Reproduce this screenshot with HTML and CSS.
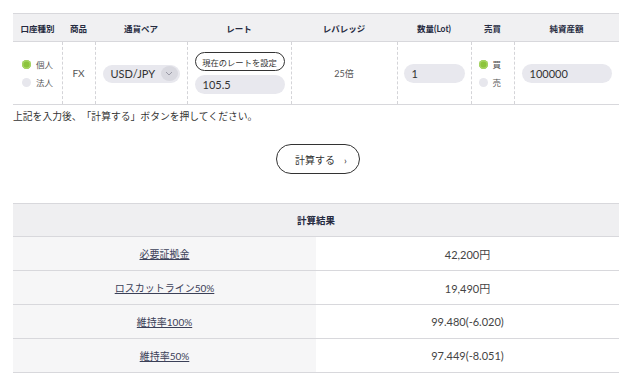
FILE: index.html
```html
<!DOCTYPE html>
<html lang="ja">
<head>
  <meta charset="UTF-8" />
  <title>証拠金計算</title>
  <link rel="stylesheet" href="styles.css">
</head>
<body>

  <div class="calc">
    <table class="input-table">
      <colgroup>
        <col style="width:49px"><col style="width:33px"><col style="width:92px"><col style="width:104px">
        <col style="width:106px"><col style="width:74px"><col style="width:43px"><col style="width:105px">
      </colgroup>
      <thead>
        <tr>
          <th>口座種別</th>
          <th>商品</th>
          <th>通貨ペア</th>
          <th>レート</th>
          <th>レバレッジ</th>
          <th>数量(Lot)</th>
          <th>売買</th>
          <th>純資産額</th>
        </tr>
      </thead>
      <tbody>
        <tr>
          <td>
            <label class="radio"><span class="dot on"></span>個人</label>
            <label class="radio"><span class="dot"></span>法人</label>
          </td>
          <td class="center">FX</td>
          <td>
            <div class="select">USD/JPY<span class="chev"><svg width="8" height="5" viewBox="0 0 8 5"><path d="M1 1l3 3 3-3" fill="none" stroke="#9a9aa6" stroke-width="1"/></svg></span></div>
          </td>
          <td>
            <button class="rate-btn" type="button">現在のレートを設定</button>
            <div class="field">105.5</div>
          </td>
          <td class="center small">25倍</td>
          <td><div class="field qty">1</div></td>
          <td>
            <label class="radio"><span class="dot on"></span>買</label>
            <label class="radio"><span class="dot"></span>売</label>
          </td>
          <td><div class="field asset">100000</div></td>
        </tr>
      </tbody>
    </table>

    <p class="note">上記を入力後、「計算する」ボタンを押してください。</p>

    <div class="actions">
      <button class="calc-btn" type="button">計算する<span class="arrow">›</span></button>
    </div>

    <table class="result-table">
      <thead>
        <tr><th colspan="2">計算結果</th></tr>
      </thead>
      <tbody>
        <tr><td class="label"><a href="#">必要証拠金</a></td><td>42,200円</td></tr>
        <tr><td class="label"><a href="#">ロスカットライン50%</a></td><td>19,490円</td></tr>
        <tr><td class="label"><a href="#">維持率100%</a></td><td>99.480(-6.020)</td></tr>
        <tr><td class="label"><a href="#">維持率50%</a></td><td>97.449(-8.051)</td></tr>
      </tbody>
    </table>
  </div>

</body>
</html>
```

FILE: styles.css
```css
* {
  box-sizing: border-box;
  font-family: Lato, "Noto Sans CJK JP", sans-serif;
  text-spacing-trim: space-all;
}

body {
  margin: 0;
  padding: 13px 0 0 13px;
  background: #ffffff;
  color: #444;
}

.calc {
  width: 606px;
}

table {
  width: 100%;
  border-collapse: collapse;
  table-layout: fixed;
}

.input-table th {
  height: 28px;
  background: #f0f0f2;
  border-top: 1px solid #d8d8dc;
  border-bottom: 1px solid #d8d8dc;
  font-size: 8.5px;
  font-weight: 700;
  color: #252a40;
  text-align: center;
  padding: 0;
}

.input-table td {
  height: 63px;
  border-bottom: 1px solid #d8d8dc;
  border-left: 1px dashed #d4d4d8;
  padding: 0 7px;
  font-size: 10px;
  color: #555;
  vertical-align: middle;
}

.input-table td:first-child {
  border-left: none;
  padding-left: 9px;
}

.center {
  text-align: center;
}

.input-table td.small {
  font-size: 9px;
}

.radio {
  display: flex;
  align-items: center;
  gap: 5px;
  height: 18px;
  font-size: 8.5px;
  color: #555;
}

.dot {
  width: 9px;
  height: 9px;
  border-radius: 50%;
  background: #e7e7ed;
}

.dot.on {
  background: #8cc43c;
  box-shadow: inset 0 0 0 1.5px #a6d464;
}

.select {
  display: flex;
  align-items: center;
  justify-content: space-between;
  height: 18px;
  margin-top: 1px;
  padding: 0 2px 0 8px;
  background: #e8e8ee;
  border-radius: 9px;
  font-size: 11px;
  color: #333;
}

.chev {
  display: flex;
  align-items: center;
  justify-content: center;
  width: 17px;
  height: 15px;
  border-radius: 50%;
  background: #d9d9e0;
}

.rate-btn {
  display: block;
  width: 90px;
  height: 19px;
  padding: 0;
  margin-bottom: 4px;
  background: #fff;
  border: 1px solid #333;
  border-radius: 10px;
  font-size: 8.3px;
  color: #333;
}

.field {
  height: 19px;
  line-height: 19px;
  width: 90px;
  padding: 0 8px;
  background: #e8e8ee;
  border-radius: 10px;
  font-size: 11px;
  color: #333;
}

.field.qty {
  width: 61px;
  margin-left: -1px;
}

.field.asset {
  width: 90px;
}

.note {
  margin: 4px 0 0;
  font-family: "Noto Sans CJK JP", sans-serif;
  font-size: 9.8px;
  line-height: 14px;
  color: #333;
}

.actions {
  display: flex;
  justify-content: center;
  margin: 21px 0 29px;
  padding-left: 4px;
}

.calc-btn {
  width: 84px;
  height: 30px;
  background: #fff;
  border: 1px solid #333;
  border-radius: 15px;
  font-size: 10px;
  color: #333;
  padding: 0 0 0 6px;
}

.arrow {
  margin-left: 9px;
  font-size: 10px;
}

.result-table th {
  height: 33px;
  background: #efeff1;
  border-top: 1px solid #d8d8dc;
  border-bottom: 1px solid #d8d8dc;
  font-size: 9.5px;
  font-weight: 700;
  color: #252a40;
}

.result-table td {
  height: 34px;
  border-bottom: 1px solid #d8d8dc;
  text-align: center;
  font-size: 11px;
  color: #444;
}

.result-table td.label {
  width: 303px;
  background: #f6f6f7;
}

.result-table a {
  color: #3b4058;
  font-size: 10px;
  text-decoration: underline;
}
```
